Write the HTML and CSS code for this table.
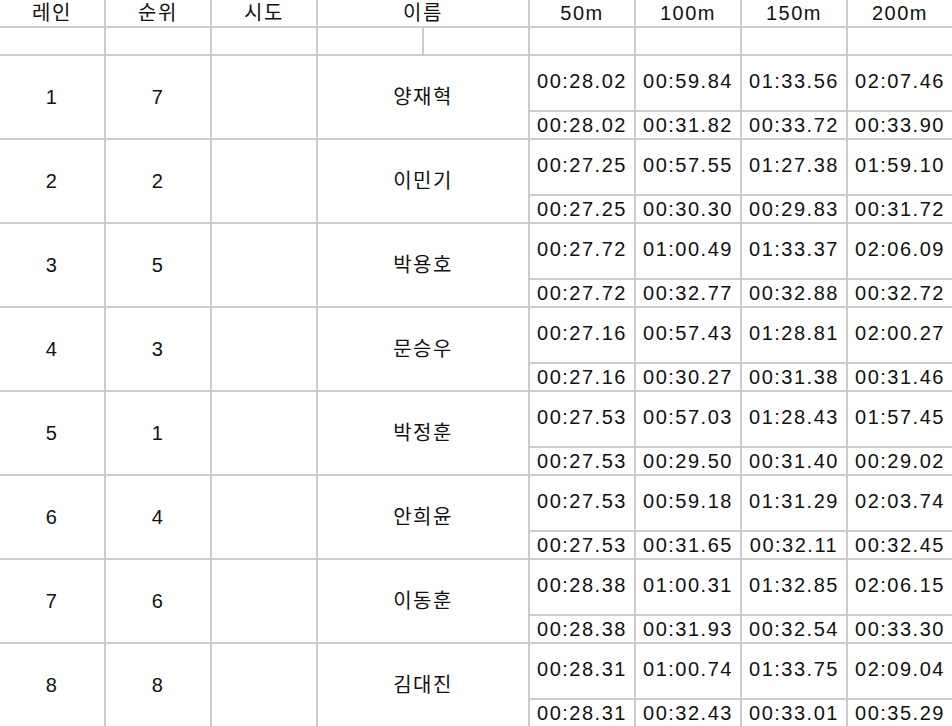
FILE: index.html
```html
<!DOCTYPE html>
<html lang="ko">
<head>
<meta charset="utf-8">
<title>경기 기록</title>
<link rel="stylesheet" href="styles.css">
</head>
<body>
<table class="results">
  <colgroup>
    <col class="c"><col class="c"><col class="c"><col class="c"><col class="c"><col class="c"><col class="c"><col class="c"><col class="c">
  </colgroup>
  <thead>
    <tr class="head">
      <th>레인</th><th>순위</th><th>시도</th><th colspan="2">이름</th><th>50m</th><th>100m</th><th>150m</th><th>200m</th>
    </tr>
    <tr class="blank">
      <td></td><td></td><td></td><td></td><td></td><td></td><td></td><td></td><td></td>
    </tr>
  </thead>
  <tbody>
    <tr class="top"><td rowspan="2">1</td><td rowspan="2">7</td><td rowspan="2"></td><td colspan="2" rowspan="2">양재혁</td><td>00:28.02</td><td>00:59.84</td><td>01:33.56</td><td>02:07.46</td></tr>
    <tr class="bot"><td>00:28.02</td><td>00:31.82</td><td>00:33.72</td><td>00:33.90</td></tr>
    <tr class="top"><td rowspan="2">2</td><td rowspan="2">2</td><td rowspan="2"></td><td colspan="2" rowspan="2">이민기</td><td>00:27.25</td><td>00:57.55</td><td>01:27.38</td><td>01:59.10</td></tr>
    <tr class="bot"><td>00:27.25</td><td>00:30.30</td><td>00:29.83</td><td>00:31.72</td></tr>
    <tr class="top"><td rowspan="2">3</td><td rowspan="2">5</td><td rowspan="2"></td><td colspan="2" rowspan="2">박용호</td><td>00:27.72</td><td>01:00.49</td><td>01:33.37</td><td>02:06.09</td></tr>
    <tr class="bot"><td>00:27.72</td><td>00:32.77</td><td>00:32.88</td><td>00:32.72</td></tr>
    <tr class="top"><td rowspan="2">4</td><td rowspan="2">3</td><td rowspan="2"></td><td colspan="2" rowspan="2">문승우</td><td>00:27.16</td><td>00:57.43</td><td>01:28.81</td><td>02:00.27</td></tr>
    <tr class="bot"><td>00:27.16</td><td>00:30.27</td><td>00:31.38</td><td>00:31.46</td></tr>
    <tr class="top"><td rowspan="2">5</td><td rowspan="2">1</td><td rowspan="2"></td><td colspan="2" rowspan="2">박정훈</td><td>00:27.53</td><td>00:57.03</td><td>01:28.43</td><td>01:57.45</td></tr>
    <tr class="bot"><td>00:27.53</td><td>00:29.50</td><td>00:31.40</td><td>00:29.02</td></tr>
    <tr class="top"><td rowspan="2">6</td><td rowspan="2">4</td><td rowspan="2"></td><td colspan="2" rowspan="2">안희윤</td><td>00:27.53</td><td>00:59.18</td><td>01:31.29</td><td>02:03.74</td></tr>
    <tr class="bot"><td>00:27.53</td><td>00:31.65</td><td>00:32.11</td><td>00:32.45</td></tr>
    <tr class="top"><td rowspan="2">7</td><td rowspan="2">6</td><td rowspan="2"></td><td colspan="2" rowspan="2">이동훈</td><td>00:28.38</td><td>01:00.31</td><td>01:32.85</td><td>02:06.15</td></tr>
    <tr class="bot"><td>00:28.38</td><td>00:31.93</td><td>00:32.54</td><td>00:33.30</td></tr>
    <tr class="top"><td rowspan="2">8</td><td rowspan="2">8</td><td rowspan="2"></td><td colspan="2" rowspan="2">김대진</td><td>00:28.31</td><td>01:00.74</td><td>01:33.75</td><td>02:09.04</td></tr>
    <tr class="bot"><td>00:28.31</td><td>00:32.43</td><td>00:33.01</td><td>00:35.29</td></tr>
  </tbody>
</table>
</body>
</html>
```
FILE: styles.css
```css
html, body {
  margin: 0;
  padding: 0;
  overflow: hidden;
  background: #fff;
}

.results {
  border-collapse: separate;
  border-spacing: 0;
  table-layout: fixed;
  width: 954px;
  font-family: "Liberation Sans", "Noto Sans CJK KR", sans-serif;
  font-size: 20px;
  letter-spacing: 1.5px;
  color: #111;
}

.results col.c {
  width: 106px;
}

.results th,
.results td {
  padding: 0;
  border-right: 2px solid #cccccc;
  border-bottom: 2px solid #cccccc;
  text-align: center;
  vertical-align: middle;
  font-weight: normal;
  line-height: 24px;
  white-space: nowrap;
  overflow: hidden;
}

.head th {
  height: 26px;
  line-height: 26px;
}

.blank td {
  height: 26px;
}

.top td {
  height: 54px;
}

.top td:nth-last-child(-n+4) {
  vertical-align: top;
  padding-top: 13px;
  height: 41px;
}

.bot td {
  height: 26px;
  line-height: 26px;
}
```
